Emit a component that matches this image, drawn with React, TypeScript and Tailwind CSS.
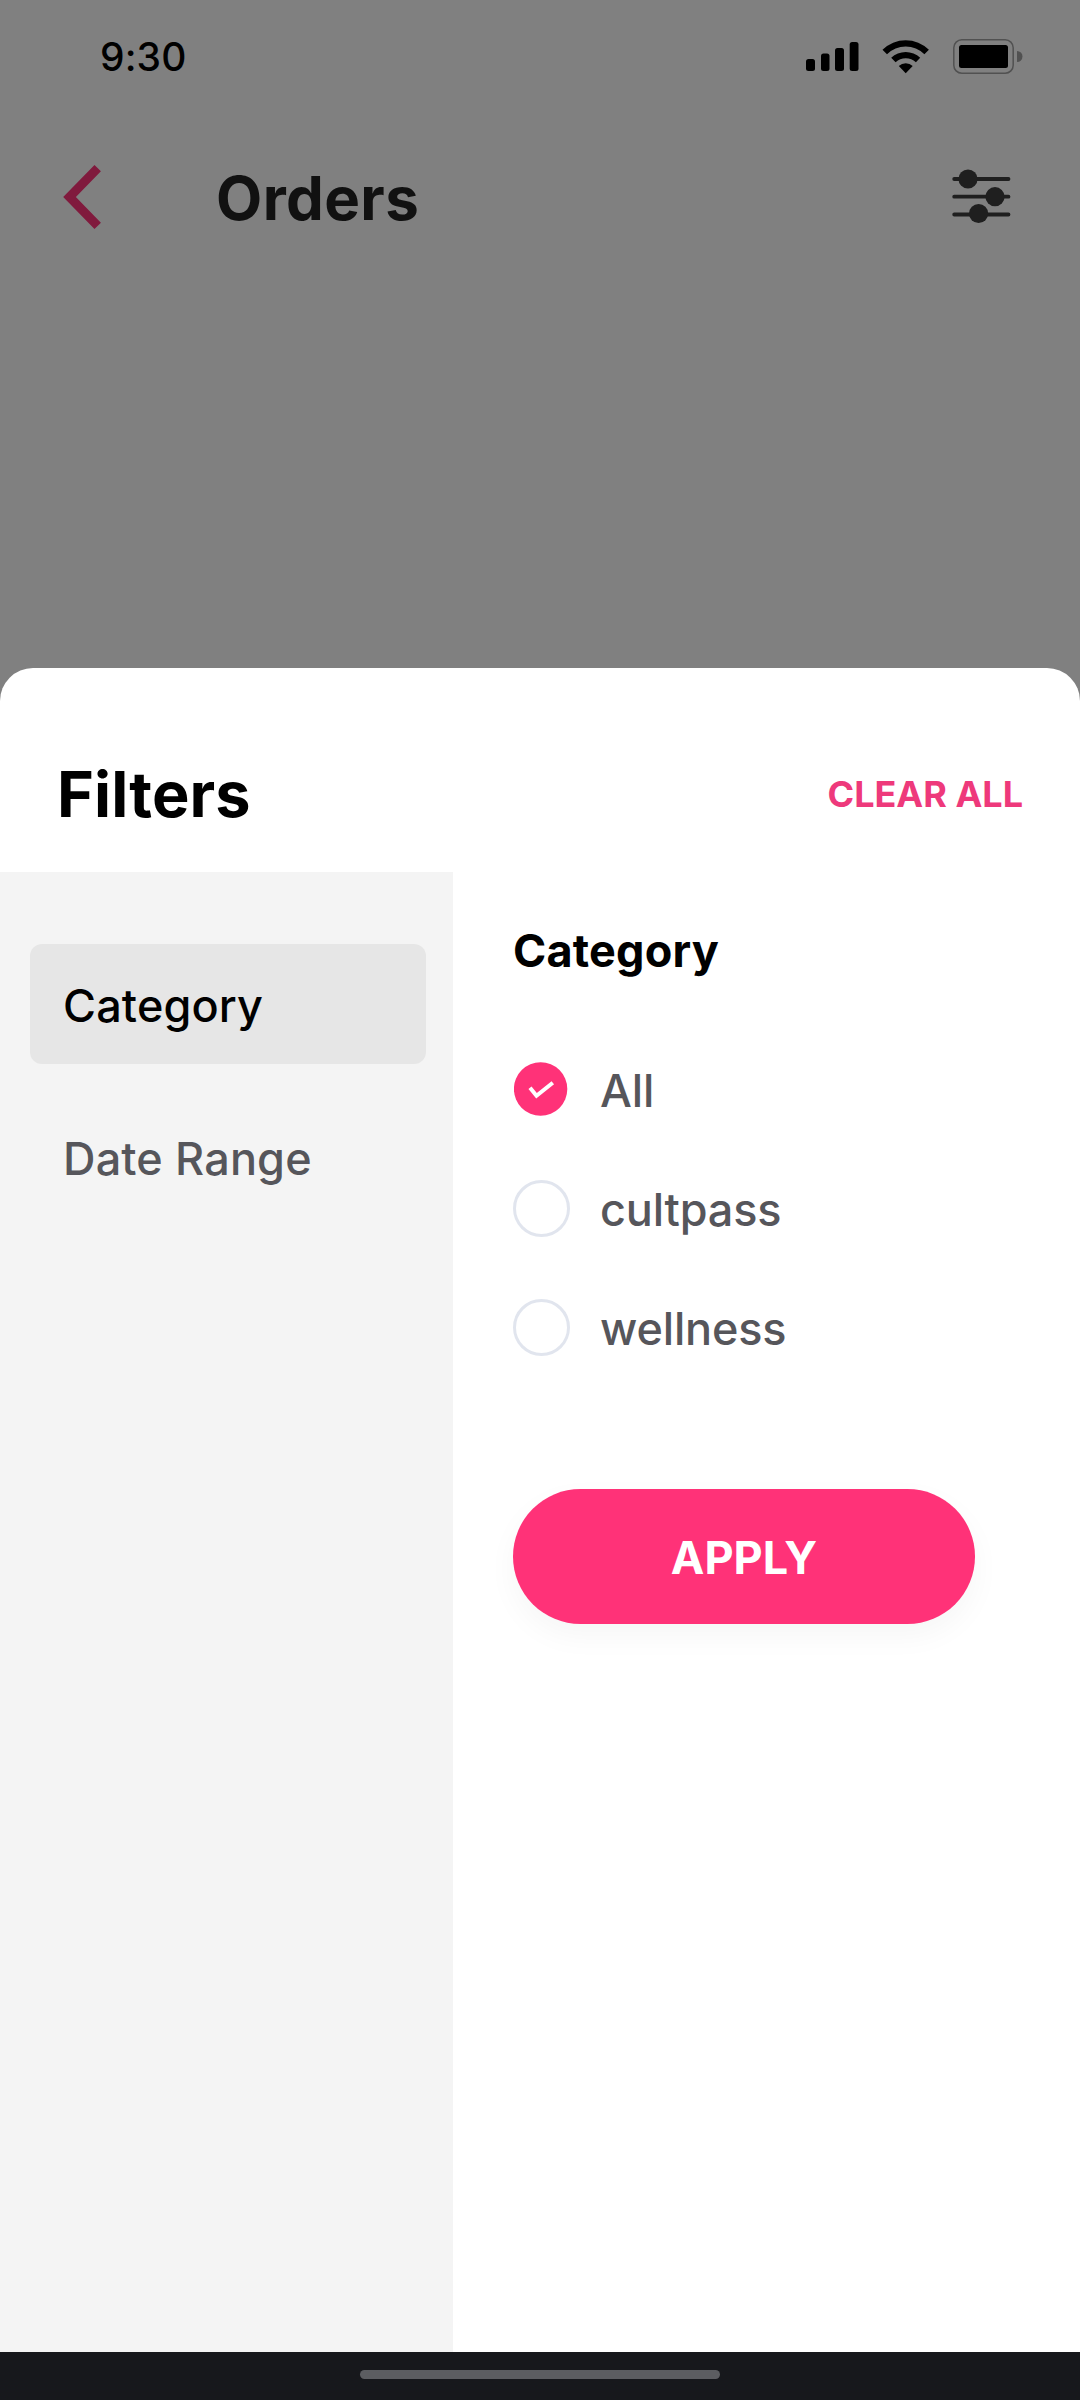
import React, { useState } from "react";
import clsx from "clsx";

const TABS = ["Category", "Date Range"];
const CATEGORIES = ["All", "cultpass", "wellness"];

function StatusBar() {
  return (
    <div className="flex h-28 items-center justify-between pl-[100px] pr-[56px] text-black">
      <span className="text-[39px] font-medium leading-none tracking-[0.1px]">9:30</span>
      <svg width="218" height="40" viewBox="0 0 218 40" fill="currentColor">
        {/* signal */}
        <rect x="0" y="23" width="9" height="12" rx="2.5" />
        <rect x="15" y="17.5" width="8.5" height="17.5" rx="2.5" />
        <rect x="29" y="12" width="9" height="23" rx="2.5" />
        <rect x="43.7" y="6" width="8.8" height="29" rx="2.5" />
        {/* wifi */}
        <path d="M76.5 13.8 A33 33 0 0 1 122.9 13.8 L118.4 18.3 A26.5 26.5 0 0 0 81 18.3 Z" />
        <path d="M85.2 21.8 A20.8 20.8 0 0 1 114.2 21.8 L109.9 26.2 A14.8 14.8 0 0 0 89.6 26.2 Z" />
        <path d="M92.8 30 A10.2 10.2 0 0 1 106.7 30 L99.7 37.2 Z" />
        {/* battery */}
        <rect x="147.8" y="3.8" width="59.4" height="33.4" rx="8" fill="none" stroke="#515151" strokeWidth="1.5" />
        <rect x="153" y="9" width="49" height="23" rx="2.5" />
        <path d="M211 15 A5.5 5.5 0 0 1 211 26 Z" fill="#515151" />
      </svg>
    </div>
  );
}

function OrdersHeader() {
  return (
    <div className="flex h-[172px] items-center pl-[62px] pr-[68px]">
      <svg width="42" height="64" viewBox="0 0 42 64" fill="none" className="-mt-0.5">
        <path d="M35.7 3.2 L7.5 32 L35.7 60.8" stroke="#801a3d" strokeWidth="9" />
      </svg>
      <h1 className="ml-[112px] flex-1 text-[60px] font-bold leading-none tracking-[0.4px] text-[#111]">Orders</h1>
      <svg width="60" height="58" viewBox="0 0 60 58" className="-mt-1" fill="#1f1f1f" stroke="#1f1f1f" strokeWidth="3.8" strokeLinecap="round">
        <path d="M2.2 12 H56.5 M2.2 29.7 H56.5 M2.2 47.5 H56.5" />
        <g stroke="none">
          <circle cx="16" cy="12" r="9.6" />
          <circle cx="43" cy="29.7" r="9.6" />
          <circle cx="26.6" cy="46.5" r="9.6" />
        </g>
      </svg>
    </div>
  );
}

interface RadioRowProps {
  label: string;
  checked: boolean;
  onSelect: () => void;
}

function RadioRow({ label, checked, onSelect }: RadioRowProps) {
  return (
    <button onClick={onSelect} className="flex h-[119px] w-full items-center text-left">
      <span className="flex w-[87px] items-center">
        {checked ? (
          <svg width="54" height="54" viewBox="0 0 54 54" className="ml-px">
            <circle cx="26.6" cy="27" r="26.7" fill="#ff3278" />
            <path d="M16 25.8 L22.5 33.7 L38.8 20.7" fill="none" stroke="#fff" strokeWidth="4" />
          </svg>
        ) : (
          <span className="mt-0.5 size-[57px] rounded-full border-3 border-[#e1e5ee]" />
        )}
      </span>
      <span className="pt-[3px] text-[45px] font-medium leading-none tracking-[-0.15px] text-[#56565b]">{label}</span>
    </button>
  );
}

export default function App() {
  const [tab, setTab] = useState("Category");
  const [category, setCategory] = useState("All");

  return (
    <div className="flex h-[2400px] w-[1080px] flex-col overflow-hidden bg-[#808080] font-['Inter',sans-serif]">
      <div className="h-[668px]">
        <StatusBar />
        <OrdersHeader />
      </div>

      {/* Bottom sheet */}
      <div className="flex flex-1 flex-col overflow-hidden rounded-t-[33px] bg-white">
        <div className="flex h-[204px] items-center justify-between pl-[57px] pr-[57px] pt-12">
          <h2 className="text-[63px] font-bold leading-none tracking-[0.1px] text-black">Filters</h2>
          <button className="text-[36px] font-bold leading-none text-[#ee397b]">CLEAR ALL</button>
        </div>

        <div className="flex flex-1">
          <div className="flex w-[453px] flex-col gap-[33px] bg-[#f4f4f4] pl-[30px] pr-[27px] pt-[72px]">
            {TABS.map((t) => (
              <button
                key={t}
                onClick={() => setTab(t)}
                className={clsx(
                  "h-[120px] rounded-xl pl-[33px] pt-[3px] text-left text-[45px] font-medium leading-none tracking-[0.15px]",
                  t === tab ? "bg-[#e6e6e6] text-black" : "text-[#56565b]"
                )}
              >
                {t}
              </button>
            ))}
          </div>

          <div className="flex-1 pl-[60px] pt-14">
            <h3 className="text-[45px] font-bold leading-none tracking-[0.2px] text-black">Category</h3>
            <div className="pt-14">
              {CATEGORIES.map((c) => (
                <RadioRow key={c} label={c} checked={c === category} onSelect={() => setCategory(c)} />
              ))}
            </div>
            <button className="mt-[103px] h-[135px] w-[462px] rounded-full bg-[#ff3278] pt-0.5 text-[45px] font-bold leading-none text-white shadow-[0_12px_30px_rgba(0,0,0,0.04)]">
              APPLY
            </button>
          </div>
        </div>
      </div>

      {/* Home indicator */}
      <div className="flex h-12 justify-center bg-[#17181c] pt-[18px]">
        <div className="h-[9px] w-[360px] rounded-full bg-[#5c5d61]" />
      </div>
    </div>
  );
}
